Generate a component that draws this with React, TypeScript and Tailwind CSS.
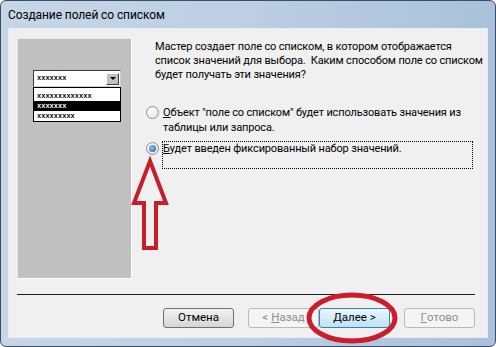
import React from "react";

const font = { fontFamily: 'Roboto, "Noto Sans", sans-serif' };

function Radio({ checked }: { checked?: boolean }) {
  return (
    <div className="w-[13px] h-[13px] shrink-0 rounded-full border border-[#8e8f8f] bg-[radial-gradient(circle_at_35%_35%,#ffffff,#dcdcdc)] flex items-center justify-center">
      {checked && (
        <div className="w-[7px] h-[7px] rounded-full bg-[radial-gradient(circle_at_40%_40%,#8cc4ee,#1d56a0)]" />
      )}
    </div>
  );
}

function Btn({
  children,
  variant = "normal",
}: {
  children: React.ReactNode;
  variant?: "normal" | "disabled" | "default";
}) {
  const cls =
    variant === "disabled"
      ? "border-[#b7babc] bg-[#f4f4f4] text-[#8d8d8d]"
      : variant === "default"
      ? "border-[#3c7fb1] bg-gradient-to-b from-[#eaf6fd] to-[#bfe2f6] text-black"
      : "border-[#707070] bg-gradient-to-b from-[#f2f2f2] to-[#d6d6d6] text-black";
  return (
    <div
      className={`w-[71px] h-[20px] shrink-0 rounded-[3px] border flex items-center justify-center text-[11.5px] leading-none whitespace-nowrap ${cls}`}
    >
      {children}
    </div>
  );
}

export default function App() {
  return (
    <div className="relative w-[496px] h-[347px] overflow-hidden bg-white" style={font}>
      <div className="w-[496px] h-[347px] flex flex-col rounded-[6px] border border-[#3d4e61] bg-gradient-to-r from-[#c5d6e7] via-[#bccfe3] to-[#a9c1da]">
        {/* title bar */}
        <div className="h-[27px] shrink-0 flex items-center pl-[7px] pt-[1px]">
          <span className="text-[12px] tracking-[-0.1px] text-black">Создание полей со списком</span>
        </div>

        {/* client area */}
        <div className="flex-1 min-h-0 px-[7px] pb-[8px] flex">
          <div className="flex-1 min-w-0 bg-[#f0f0f0] border border-[#e4edf6] flex flex-col">
            <div className="flex pt-[9px] pl-[8px]">
              {/* picture panel */}
              <div className="w-[115px] h-[241px] shrink-0 bg-[#c0c0c0] border border-t-[#e6e6e6] border-l-[#e6e6e6] border-b-white border-r-white pt-[31px] pl-[15px]">
                <div className="w-[88px] h-[17px] bg-white border border-t-[#3a3a3a] border-l-[#3a3a3a] border-b-[#cfcfcf] border-r-[#cfcfcf] flex items-center justify-between pl-[3px] pr-[1px]">
                  <span className="text-[7px] font-bold leading-none" style={{ fontFamily: '"Liberation Mono", monospace' }}>
                    xxxxxxx
                  </span>
                  <div className="w-[13px] h-[12px] bg-[#c0c0c0] border border-t-white border-l-white border-b-[#404040] border-r-[#404040] flex items-center justify-center">
                    <div className="w-0 h-0 border-x-[3px] border-x-transparent border-t-[3px] border-t-black" />
                  </div>
                </div>
                <div
                  className="w-[88px] h-[35px] bg-white border border-black pt-[3px] text-[7px] font-bold leading-[10px]"
                  style={{ fontFamily: '"Liberation Mono", monospace' }}
                >
                  <div className="h-[10px] pl-[3px]">xxxxxxxxxxxxx</div>
                  <div className="h-[10px] pl-[3px] bg-black text-white">xxxxxxx</div>
                  <div className="h-[10px] pl-[3px]">xxxxxxxxx</div>
                </div>
              </div>

              {/* text column */}
              <div className="ml-[14px] flex-1 min-w-0 flex flex-col text-[11px] tracking-[-0.15px] text-black whitespace-nowrap">
                <div className="pl-[9px] mt-[2px] leading-[14px]">
                  <div>Мастер создает поле со списком, в котором отображается</div>
                  <div>список значений для выбора.&nbsp; Каким способом поле со списком</div>
                  <div>будет получать эти значения?</div>
                </div>

                <div className="mt-[23px] flex items-start">
                  <div className="mt-[1px]">
                    <Radio />
                  </div>
                  <div className="ml-[4px] leading-[15px]">
                    <div>
                      <span className="underline">О</span>бъект "поле со списком" будет использовать значения из
                    </div>
                    <div>таблицы или запроса.</div>
                  </div>
                </div>

                <div className="mt-[6px] flex items-start">
                  <div className="mt-[1px]">
                    <Radio checked />
                  </div>
                  <div className="ml-[3px] w-[311px] h-[28px] border border-dotted border-black leading-[14px]">
                    <span className="underline">Б</span>удет введен фиксированный набор значений.
                  </div>
                </div>
              </div>
            </div>

            {/* separator */}
            <div className="mt-[15px] ml-[8px] mr-[12px] h-px bg-[#1e1e1e]" />

            {/* buttons */}
            <div className="mt-[13px] mr-[12px] flex justify-end">
              <Btn>Отмена</Btn>
              <div className="ml-[14px] flex">
                <Btn variant="disabled">
                  &lt; <span className="underline ml-[3px]">Н</span>азад
                </Btn>
                <Btn variant="default">
                  <span className="underline">Д</span>алее &gt;
                </Btn>
              </div>
              <div className="ml-[14px]">
                <Btn variant="disabled">
                  <span className="underline">Г</span>отово
                </Btn>
              </div>
            </div>
          </div>
        </div>
      </div>

      {/* red annotations */}
      <svg className="absolute inset-0 pointer-events-none" width="496" height="347" viewBox="0 0 496 347">
        <polygon
          points="150,161 166,203 156,203 156,248 144,248 144,203 134,203"
          fill="none"
          stroke="#c81e2a"
          strokeWidth="4"
          strokeLinejoin="miter"
        />
        <ellipse cx="352" cy="318" rx="43" ry="23" fill="none" stroke="#cc1d2c" strokeWidth="5" />
      </svg>
    </div>
  );
}
